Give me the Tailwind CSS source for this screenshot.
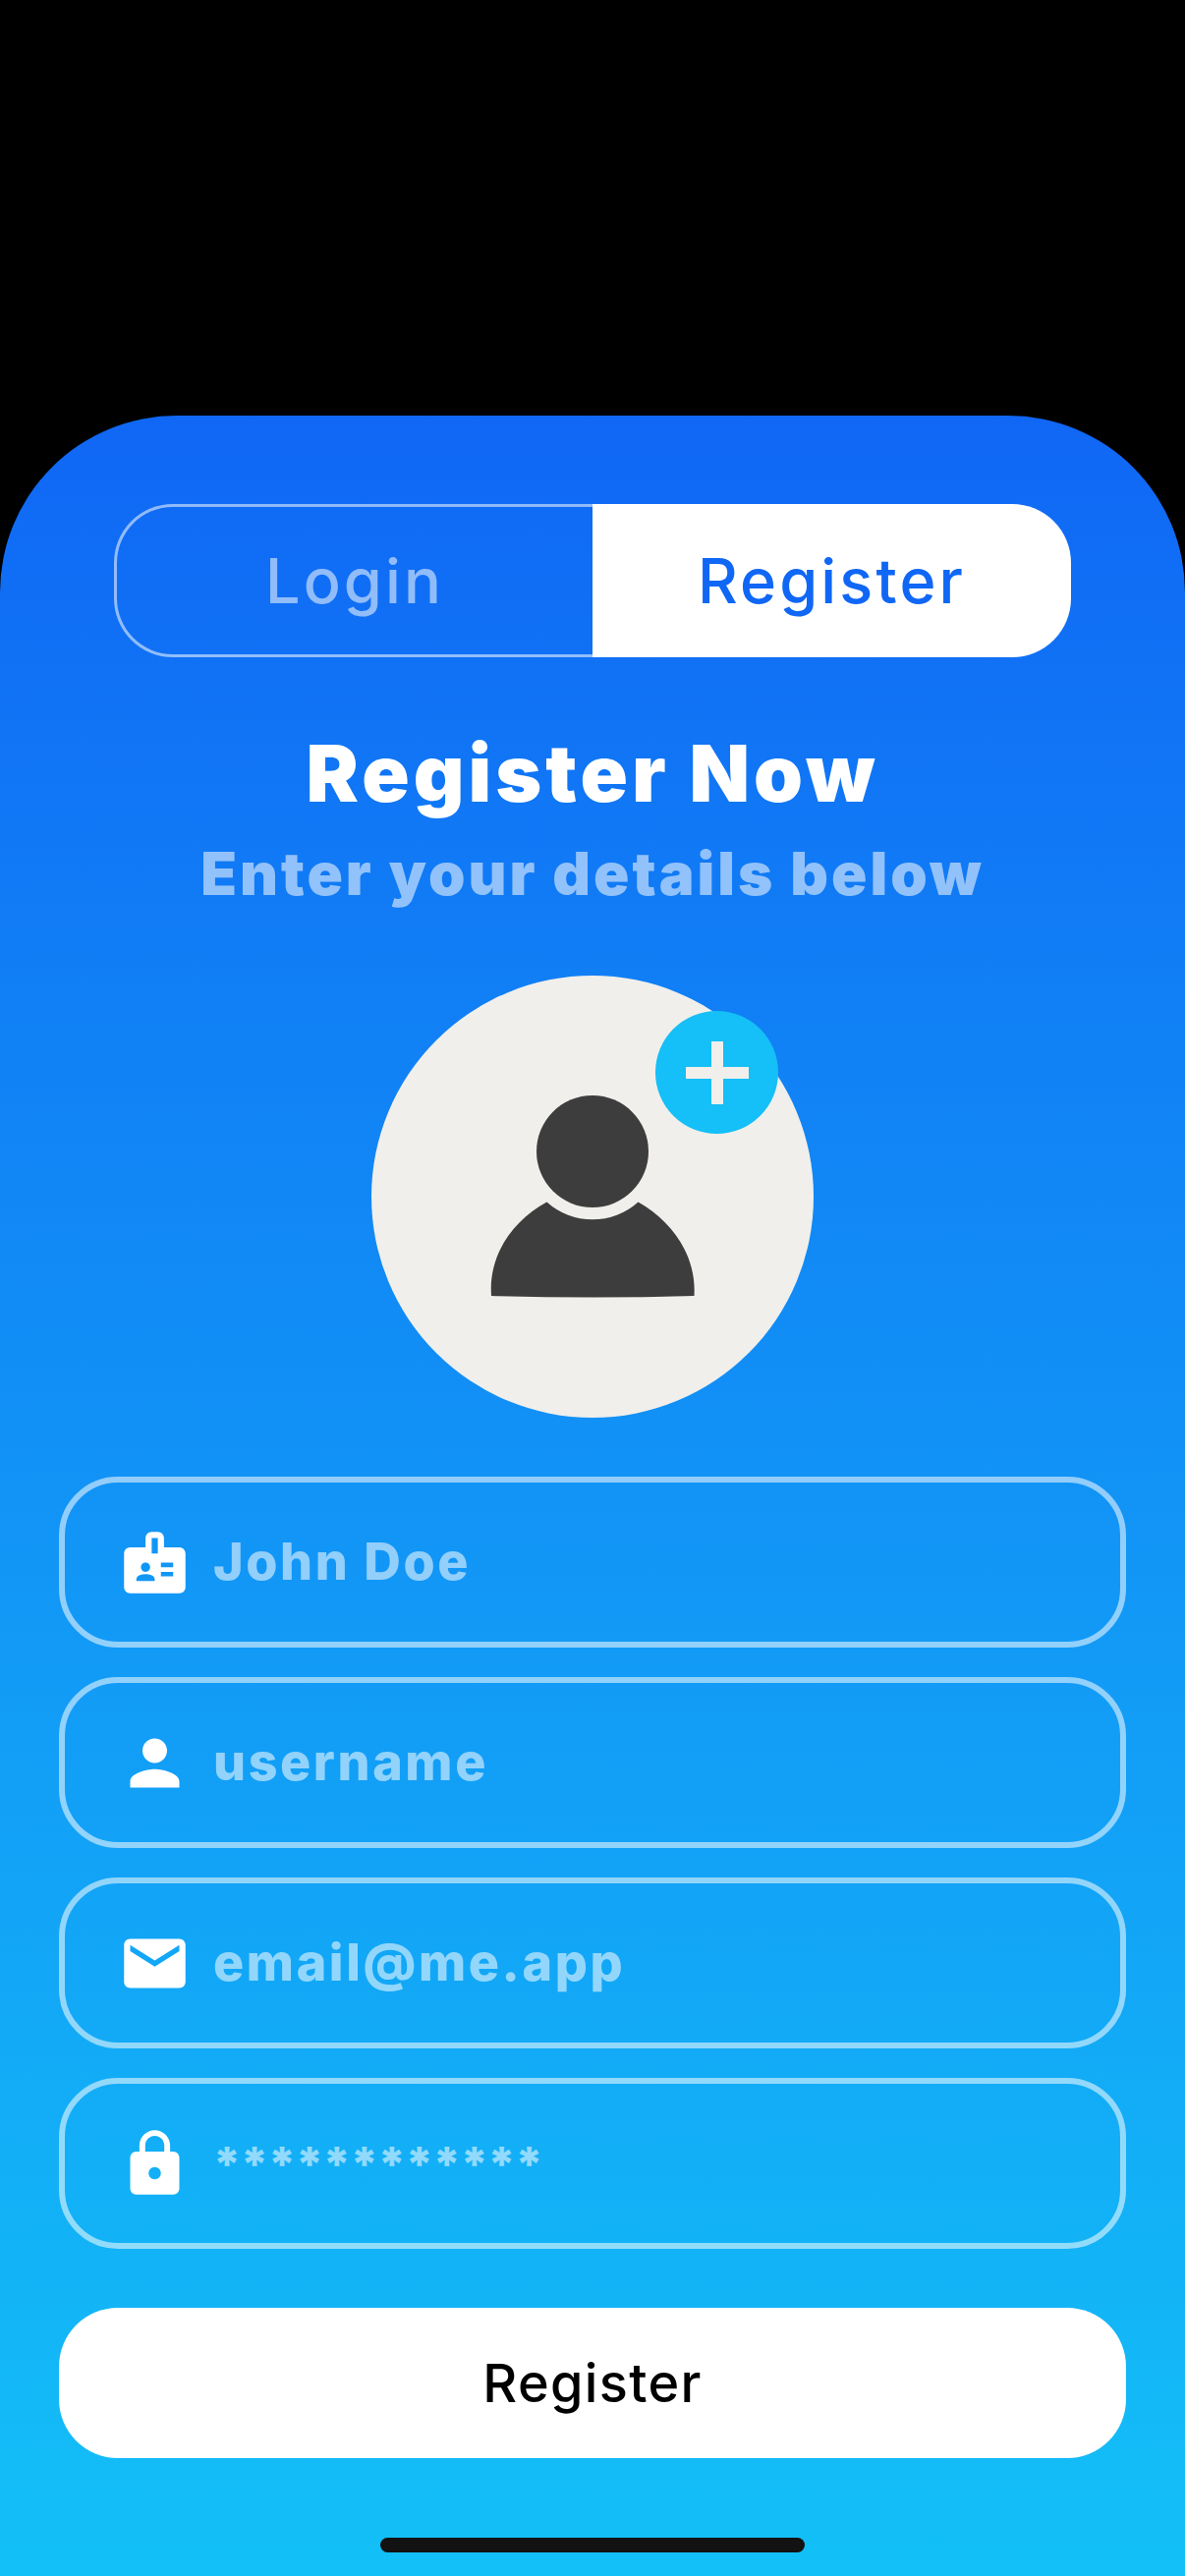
<!DOCTYPE html>
<html lang="en">
<head>
<meta charset="utf-8">
<meta name="viewport" content="width=device-width, initial-scale=1">
<title>Register</title>
<script src="https://cdn.jsdelivr.net/npm/@tailwindcss/browser@4"></script>
</head>
<body class="bg-black font-['Inter',sans-serif]">
<div class="flex min-h-screen flex-col pt-[423px]">
  <main class="flex flex-1 flex-col items-center rounded-t-[180px] bg-linear-to-b/srgb from-[#1067f5] to-[#13c0f7] px-[60px] pt-[90px] pb-6">
    <nav class="flex h-[156px] w-full px-14" aria-label="Account">
      <button type="button" class="w-1/2 rounded-l-[60px] border-[3px] border-r-0 border-white/54 text-[63px] leading-none font-medium tracking-wider text-white/54">Login</button>
      <button type="button" class="w-1/2 rounded-r-[60px] bg-white text-[63px] leading-none font-medium tracking-wider text-[#1067f5]" aria-current="page">Register</button>
    </nav>

    <h1 class="mt-[73px] text-[80px] leading-[90px] font-black tracking-wider text-white">Register Now</h1>
    <p class="mt-[21px] text-[60px] leading-[72px] font-black tracking-wider text-white/54">Enter your details below</p>

    <div class="relative mt-[68px] size-[450px]">
      <svg class="size-full" viewBox="0 0 450 450" role="img" aria-label="Profile picture">
        <circle cx="225" cy="225" r="225" fill="#f0efeb"/>
        <circle cx="225" cy="179" r="57" fill="#3d3d3d"/>
        <path fill="#3d3d3d" d="M178.500 230.500A69.500 69.500 0 0 0 271.500 230.500C306 250 331 285 328.500 326Q225 329 122 326C119 285 143 250 178.500 230.500Z"/>
      </svg>
      <button type="button" aria-label="Add photo" class="absolute top-9 right-9 flex size-[125px] items-center justify-center rounded-full bg-[#15bff7]">
        <svg class="size-16" viewBox="0 0 64 64" fill="#f0efeb"><path d="M26 0h12v26h26v12H38v26H26V38H0V26h26z"/></svg>
      </button>
    </div>

    <form class="mt-[60px] flex w-full flex-col gap-[30px]">
      <label class="flex h-[174px] items-center gap-[22px] rounded-[60px] border-[6px] border-white/54 px-[54px]">
        <svg class="size-[75px] shrink-0" viewBox="0 0 24 24" fill="white" aria-hidden="true"><path fill-rule="evenodd" d="M20 7h-5V4c0-1.100-.9-2-2-2h-2c-1.100 0-2 .9-2 2v3H4c-1.100 0-2 .9-2 2v11c0 1.100.9 2 2 2h16c1.100 0 2-.9 2-2V9c0-1.100-.9-2-2-2zM9 12c.83 0 1.500.67 1.500 1.500S9.830 15 9 15s-1.500-.67-1.500-1.500S8.170 12 9 12zm3 6H6v-.43c0-.6.360-1.150.920-1.390.650-.28 1.350-.43 2.080-.43s1.430.15 2.080.43c.550.240.920.780.920 1.390V18zm1-9h-2V4h2v5zm5 7.500h-4V15h4v1.500zm0-3h-4V12h4v1.500z"/></svg>
        <input type="text" aria-label="Full name" placeholder="John Doe" class="min-w-0 flex-1 bg-transparent text-[52px] font-extrabold tracking-wider text-white outline-none placeholder:text-white/54">
      </label>
      <label class="flex h-[174px] items-center gap-[22px] rounded-[60px] border-[6px] border-white/54 px-[54px]">
        <svg class="size-[75px] shrink-0" viewBox="0 0 24 24" fill="white" aria-hidden="true"><path d="M12 12c2.210 0 4-1.790 4-4s-1.790-4-4-4-4 1.790-4 4 1.790 4 4 4zm0 2c-2.670 0-8 1.340-8 4v2h16v-2c0-2.660-5.330-4-8-4z"/></svg>
        <input type="text" aria-label="Username" placeholder="username" class="min-w-0 flex-1 bg-transparent text-[52px] font-extrabold tracking-wider text-white outline-none placeholder:text-white/54">
      </label>
      <label class="flex h-[174px] items-center gap-[22px] rounded-[60px] border-[6px] border-white/54 px-[54px]">
        <svg class="size-[75px] shrink-0" viewBox="0 0 24 24" fill="white" aria-hidden="true"><path d="M20 4H4c-1.100 0-1.990.9-1.990 2L2 18c0 1.100.9 2 2 2h16c1.100 0 2-.9 2-2V6c0-1.100-.9-2-2-2zm0 4l-8 5-8-5V6l8 5 8-5v2z"/></svg>
        <input type="email" aria-label="Email" placeholder="email@me.app" class="min-w-0 flex-1 bg-transparent text-[52px] font-extrabold tracking-wider text-white outline-none placeholder:text-white/54">
      </label>
      <label class="flex h-[174px] items-center gap-[22px] rounded-[60px] border-[6px] border-white/54 px-[54px]">
        <svg class="size-[75px] shrink-0" viewBox="0 0 24 24" fill="white" aria-hidden="true"><path fill-rule="evenodd" d="M18 8h-1V6c0-2.760-2.240-5-5-5S7 3.240 7 6v2H6c-1.100 0-2 .9-2 2v10c0 1.100.9 2 2 2h12c1.100 0 2-.9 2-2V10c0-1.100-.9-2-2-2zm-6 9c-1.100 0-2-.9-2-2s.9-2 2-2 2 .9 2 2-.9 2-2 2zm3.100-9H8.900V6c0-1.710 1.390-3.100 3.100-3.100s3.100 1.390 3.100 3.100v2z"/></svg>
        <input type="password" aria-label="Password" placeholder="************" class="min-w-0 flex-1 bg-transparent text-5xl font-extrabold text-white outline-none placeholder:text-white/54">
      </label>
      <button type="submit" class="mt-[30px] h-[153px] rounded-[60px] bg-white text-[54px] leading-none font-medium tracking-wide text-black">Register</button>
    </form>

    <div class="mt-auto h-[15px] w-[432px] rounded-full bg-[#121212]"></div>
  </main>
</div>
</body>
</html>
